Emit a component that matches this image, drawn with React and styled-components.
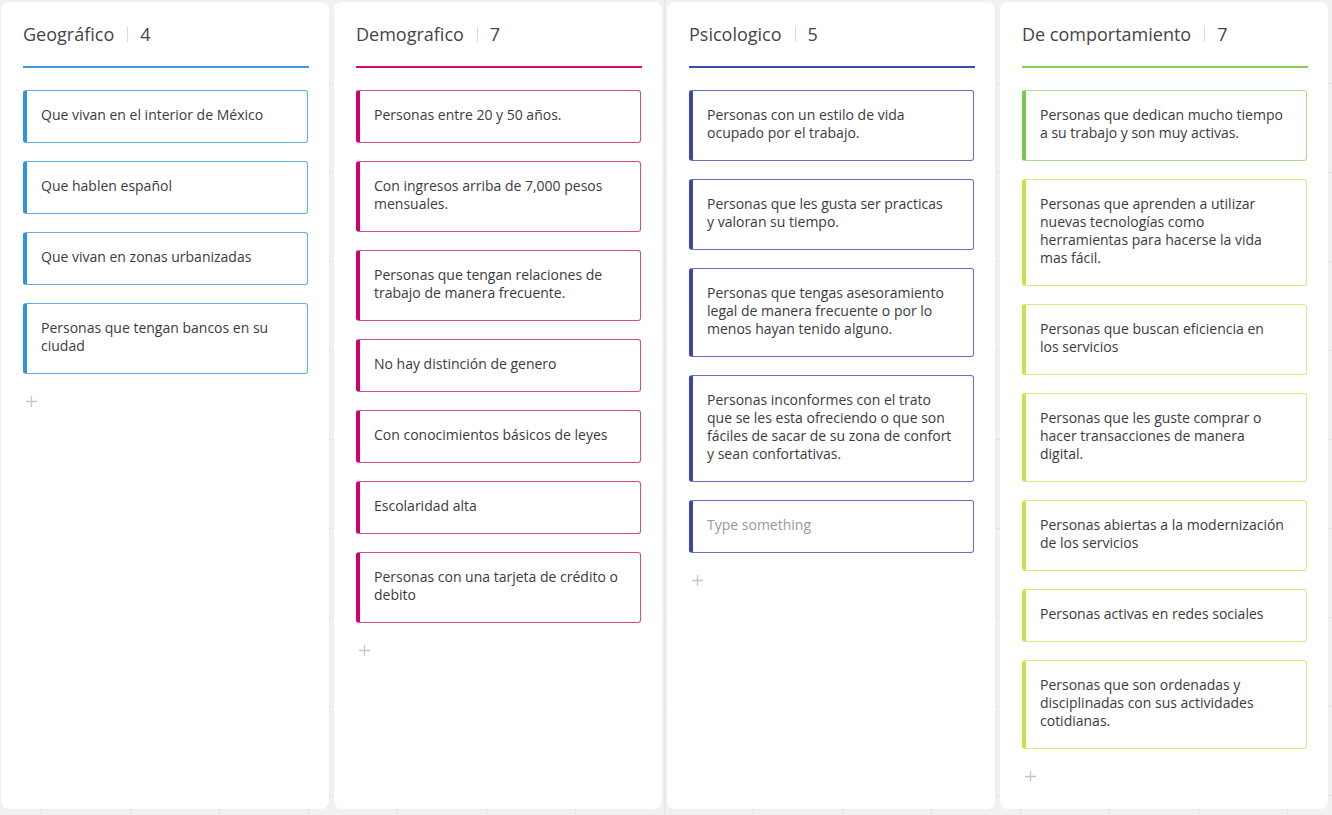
import React from 'react';
import styled, { createGlobalStyle } from 'styled-components';

const GlobalStyle = createGlobalStyle`
  html, body {
    margin: 0;
    padding: 0;
    height: 100%;
  }
  body {
    font-family: 'Open Sans', 'Noto Sans', sans-serif;
    background-color: #f1f1f1;
    background-image:
      linear-gradient(to right, #e5e5e5 1px, transparent 1px),
      linear-gradient(to bottom, #e5e5e5 1px, transparent 1px);
    background-size: 89px 89px;
    background-position: 41px 83px;
    overflow: hidden;
  }
`;

const Board = styled.div`
  display: flex;
  gap: 5px;
  padding: 2px 0 0 1px;
  height: 815px;
  box-sizing: border-box;
`;

const Column = styled.section`
  width: 328px;
  height: 807px;
  box-sizing: border-box;
  background: #ffffff;
  border-radius: 8px;
  padding: 20px 20px 0 22px;
  display: flex;
  flex-direction: column;
`;

const Header = styled.div`
  display: flex;
  align-items: center;
  height: 24px;
  padding-bottom: 20px;
  border-bottom: 2px solid ${p => p.$accent};
  margin-bottom: 22px;
`;

const Title = styled.h2`
  margin: 0;
  font-size: 18px;
  font-weight: 400;
  color: #454545;
  line-height: 24px;
`;

const Divider = styled.span`
  width: 1px;
  height: 15px;
  background: #dadada;
  margin: 0 12px 0 13px;
`;

const Count = styled.span`
  font-size: 18px;
  color: #454545;
  line-height: 24px;
`;

const CardList = styled.div`
  display: flex;
  flex-direction: column;
  gap: 18px;
`;

const Card = styled.div`
  box-sizing: border-box;
  width: 285px;
  border: 1px solid ${p => p.$border};
  border-left: 4px solid ${p => p.$accent};
  border-radius: 3px;
  padding: 15px 20px 18px 14px;
  font-size: 14px;
  line-height: 18px;
  color: ${p => (p.$placeholder ? '#9a9a9a' : '#3b3b3b')};
  background: #fff;
`;

const AddButton = styled.button`
  margin: 20px 0 0 1px;
  padding: 0;
  width: 14px;
  height: 14px;
  border: 0;
  background: transparent;
  display: flex;
  align-items: center;
  justify-content: center;
  cursor: pointer;
`;

const PlusIcon = () => (
  <svg width="11" height="11" viewBox="0 0 11 11">
    <path d="M5.5 0v11M0 5.5h11" stroke="#c6c6c6" strokeWidth="1.3" />
  </svg>
);

const columns = [
  {
    title: 'Geográfico',
    accent: '#3b9de8',
    cardAccent: '#2f93e4',
    cardBorder: '#5eaee8',
    cards: [
      'Que vivan en el interior de México',
      'Que hablen español',
      'Que vivan en zonas urbanizadas',
      'Personas que tengan bancos en su ciudad',
    ],
  },
  {
    title: 'Demografico',
    accent: '#d60a6a',
    cardAccent: '#d3006b',
    cardBorder: '#d94a8c',
    cards: [
      'Personas entre 20 y 50 años.',
      'Con ingresos arriba de 7,000 pesos mensuales.',
      'Personas que tengan relaciones de trabajo de manera frecuente.',
      'No hay distinción de genero',
      'Con conocimientos básicos de leyes',
      'Escolaridad alta',
      'Personas con una tarjeta de crédito o debito',
    ],
  },
  {
    title: 'Psicologico',
    accent: '#4049ad',
    cardAccent: '#3c46a8',
    cardBorder: '#6a70bd',
    cards: [
      'Personas con un estilo de vida ocupado por el trabajo.',
      'Personas que les gusta ser practicas y valoran su tiempo.',
      'Personas que tengas asesoramiento legal de manera frecuente o por lo menos hayan tenido alguno.',
      'Personas inconformes con el trato que se les esta ofreciendo o que son fáciles de sacar de su zona de confort y sean confortativas.',
    ],
    placeholder: 'Type something',
  },
  {
    title: 'De comportamiento',
    accent: '#86cf4f',
    cardAccent: '#c5e648',
    cardBorder: '#d5ec7c',
    cards: [
      {
        text: 'Personas que dedican mucho tiempo a su trabajo y son muy activas.',
        accent: '#7cc84b',
        border: '#addd8a',
      },
      'Personas que aprenden a utilizar nuevas tecnologías como herramientas para hacerse la vida mas fácil.',
      'Personas que buscan eficiencia en los servicios',
      'Personas que les guste comprar o hacer transacciones de manera digital.',
      'Personas abiertas a la modernización de los servicios',
      'Personas activas en redes sociales',
      'Personas que son ordenadas y disciplinadas con sus actividades cotidianas.',
    ],
  },
];

const App = () => (
  <>
    <GlobalStyle />
    <Board>
      {columns.map(col => (
        <Column key={col.title}>
          <Header $accent={col.accent}>
            <Title>{col.title}</Title>
            <Divider />
            <Count>{col.title === 'Psicologico' ? 5 : col.cards.length}</Count>
          </Header>
          <CardList>
            {col.cards.map((card, i) => {
              const c = typeof card === 'string' ? { text: card } : card;
              return (
                <Card
                  key={i}
                  $accent={c.accent || col.cardAccent}
                  $border={c.border || col.cardBorder}
                >
                  {c.text}
                </Card>
              );
            })}
            {col.placeholder && (
              <Card $accent={col.cardAccent} $border={col.cardBorder} $placeholder>
                {col.placeholder}
              </Card>
            )}
          </CardList>
          <AddButton aria-label="Add card">
            <PlusIcon />
          </AddButton>
        </Column>
      ))}
    </Board>
  </>
);

export default App;
